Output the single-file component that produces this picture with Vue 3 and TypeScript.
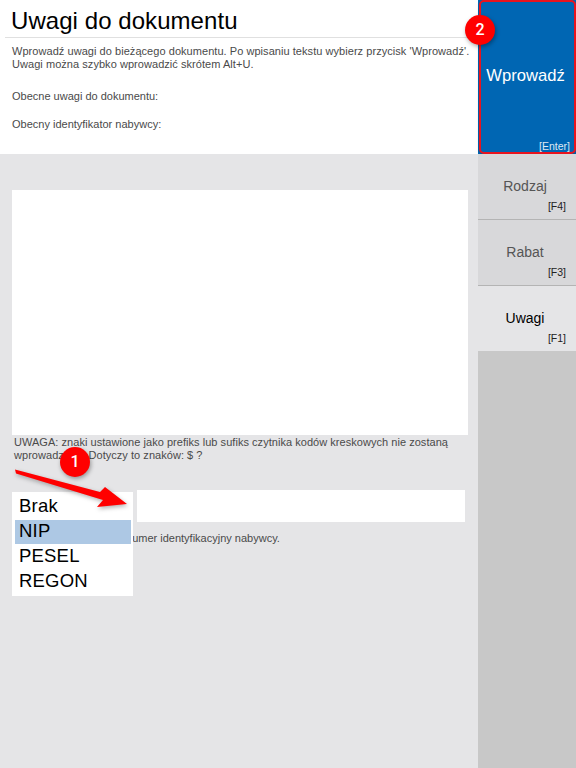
<script setup lang="ts">
const options: string[] = ['Brak', 'NIP', 'PESEL', 'REGON']
const tabs = [
  { label: 'Rodzaj', key: '[F4]', active: false },
  { label: 'Rabat', key: '[F3]', active: false },
  { label: 'Uwagi', key: '[F1]', active: true },
]
</script>

<template>
  <div class="page">
    <main class="main">
      <header class="head">
        <h1 class="title">Uwagi do dokumentu</h1>
        <div class="info">
          <p class="intro">Wprowadź uwagi do bieżącego dokumentu. Po wpisaniu tekstu wybierz przycisk 'Wprowadź'.<br />Uwagi można szybko wprowadzić skrótem Alt+U.</p>
          <p class="cur first">Obecne uwagi do dokumentu:</p>
          <p class="cur">Obecny identyfikator nabywcy:</p>
        </div>
      </header>
      <section class="body">
        <div class="area"></div>
        <p class="warn">UWAGA: znaki ustawione jako prefiks lub sufiks czytnika kodów kreskowych nie zostaną<br />wprowadzone. Dotyczy to znaków: $ ?</p>
        <div class="idrow">
          <div class="input"></div>
          <p class="hint">Wprowadź numer identyfikacyjny nabywcy.</p>
          <div class="select">
            <div v-for="o in options" :key="o" class="opt" :class="{ sel: o === 'NIP' }">{{ o }}</div>
          </div>
        </div>
      </section>
    </main>
    <aside class="side">
      <div class="enter">
        <span class="enter-label">Wprowadź</span>
        <span class="enter-key">[Enter]</span>
        <div class="enter-frame"></div>
      </div>
      <div v-for="t in tabs" :key="t.label" class="tab" :class="{ active: t.active }">
        <span class="tab-label">{{ t.label }}</span>
        <span class="tab-key">{{ t.key }}</span>
      </div>
    </aside>

    <svg class="arrow" width="120" height="50" viewBox="0 0 120 50">
      <path d="M1 2.5 L86 25 L91 20 L113 37 L83 40 L89 33 L2 6.5 Z" fill="#f00" />
    </svg>
    <div class="badge b1">1</div>
    <div class="badge b2">2</div>
  </div>
</template>

<style>
html, body { margin: 0; padding: 0; }
</style>

<style scoped>
.page {
  position: relative;
  display: flex;
  width: 576px;
  height: 768px;
  overflow: hidden;
  background: #e5e5e7;
  font-family: "Liberation Sans", Arial, sans-serif;
}
p { margin: 0; }
.main { width: 478px; display: flex; flex-direction: column; }
.head { height: 154px; background: #fff; box-sizing: border-box; padding-top: 4px; }
.title {
  margin: 0 0 0 11px;
  font-size: 24px;
  letter-spacing: 0.06px;
  font-weight: 400;
  line-height: 33px;
  color: #000;
}
.info {
  margin: 0 0 0 5px;
  border-top: 1px solid #e0e0e0;
  padding: 7px 0 0 7px;
  font-size: 11px;
  line-height: 13px;
  color: #4a4a4a;
}
.intro { white-space: nowrap; letter-spacing: 0.05px; }
.cur { margin-top: 15px; }
.cur.first { margin-top: 19px; }
.body { flex: 1; padding: 36px 0 0 12px; }
.area { width: 456px; height: 245px; background: #fff; }
.warn {
  margin: 1px 0 0 2px;
  font-size: 11px;
  letter-spacing: 0.04px;
  line-height: 13px;
  color: #4a4a4a;
  white-space: nowrap;
}
.idrow { position: relative; margin-top: 28px; }
.select {
  position: absolute;
  left: 0;
  top: 2px;
  width: 121px;
  height: 104px;
  box-sizing: border-box;
  padding: 3px 2px 0 3px;
  background: #fff;
}
.opt {
  height: 25px;
  line-height: 21px;
  padding-left: 4px;
  font-size: 18.5px;
  letter-spacing: 0.2px;
  color: #000;
}
.opt.sel { background: linear-gradient(#adc8e4 24px, transparent 24px); }
.input { margin-left: 125px; width: 328px; height: 32px; background: #fff; }
.hint {
  margin: 10px 0 0 59px;
  font-size: 11px;
  line-height: 13px;
  color: #4a4a4a;
  white-space: nowrap;
}
.side { width: 98px; background: #c8c8c8; display: flex; flex-direction: column; }
.enter {
  position: relative;
  height: 154px;
  background: #0066b3;
  color: #fff;
}
.enter-frame {
  position: absolute;
  left: 1px;
  right: 0;
  top: 0;
  bottom: 0;
  border: 2px solid #e8141e;
  border-radius: 5px;
  box-shadow: 0 1px 3px rgba(0, 0, 0, 0.2);
}
.enter-label {
  position: absolute;
  left: 0;
  right: 3px;
  top: 67px;
  font-size: 16.6px;
  line-height: 18px;
  text-align: center;
}
.enter-key { position: absolute; right: 6px; bottom: 1px; font-size: 10.5px; line-height: 13px; color: #dfe9f4; }
.tab {
  position: relative;
  height: 66px;
  box-sizing: border-box;
  background: #d8d8da;
  border-bottom: 1px solid #b4b4b4;
  color: #555;
}
.tab.active { height: 65px; background: #e5e5e7; color: #000; border-bottom: 0; }
.tab-label {
  position: absolute;
  left: 0;
  right: 4px;
  top: 23px;
  text-align: center;
  font-size: 14px;
  line-height: 18px;
}
.tab-key { position: absolute; right: 10px; top: 46px; font-size: 10.5px; line-height: 13px; color: #222; }
.arrow { position: absolute; left: 14px; top: 467px; filter: drop-shadow(1px 2px 2px rgba(0, 0, 0, 0.3)); }
.badge {
  position: absolute;
  width: 30px;
  height: 30px;
  border-radius: 50%;
  background: #f00;
  color: #fff;
  font-family: Roboto, "Liberation Sans", sans-serif;
  font-weight: 500;
  font-size: 16px;
  line-height: 30px;
  text-align: center;
  box-shadow: 1px 2px 4px rgba(0, 0, 0, 0.35);
}
.b1 { left: 60px; top: 447px; }
.b2 { left: 465px; top: 15px; }
</style>
